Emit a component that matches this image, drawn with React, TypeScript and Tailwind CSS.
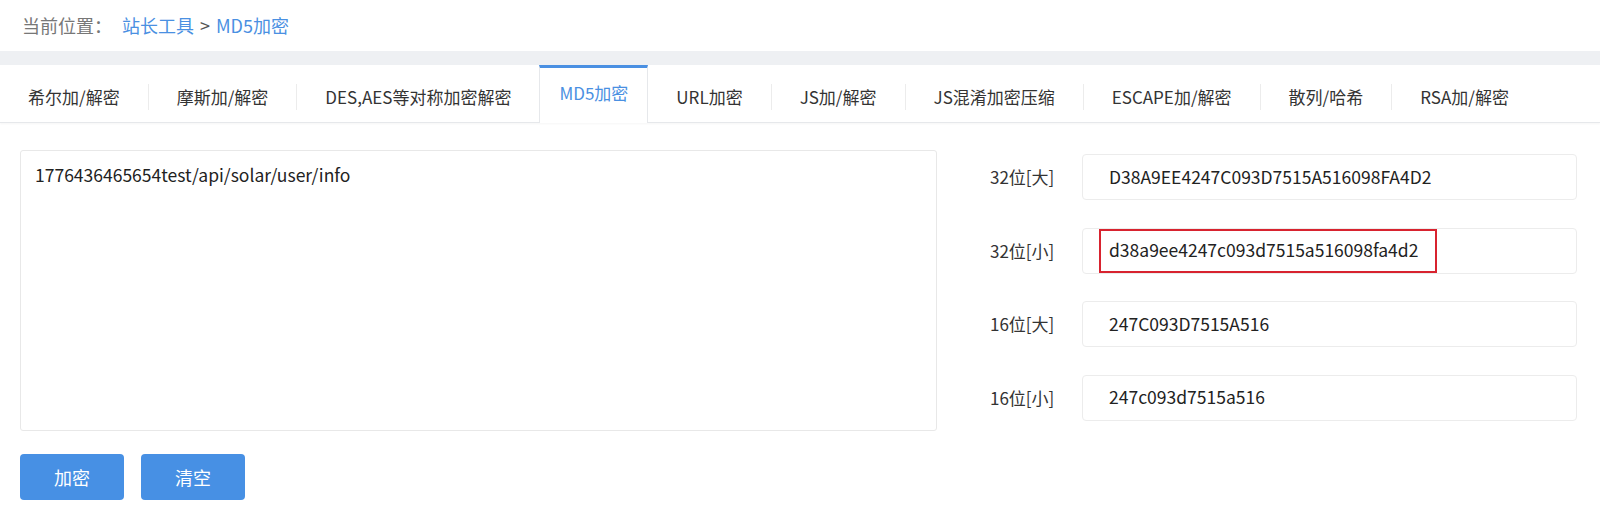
import React from "react";

const tabs = [
  "希尔加/解密",
  "摩斯加/解密",
  "DES,AES等对称加密解密",
  "MD5加密",
  "URL加密",
  "JS加/解密",
  "JS混淆加密压缩",
  "ESCAPE加/解密",
  "散列/哈希",
  "RSA加/解密",
];

const results = [
  { label: "32位[大]", value: "D38A9EE4247C093D7515A516098FA4D2" },
  { label: "32位[小]", value: "d38a9ee4247c093d7515a516098fa4d2", marked: true },
  { label: "16位[大]", value: "247C093D7515A516" },
  { label: "16位[小]", value: "247c093d7515a516" },
];

export default function App() {
  const active = "MD5加密";

  return (
    <div
      className="w-[1600px] h-[527px] bg-white text-[#333] overflow-hidden"
      style={{ fontFamily: '"Noto Sans CJK SC", "Noto Sans", sans-serif' }}
    >
      {/* breadcrumb */}
      <div className="h-[51px] flex items-center pl-[22px] text-[18px]">
        <span className="text-[#777]">当前位置：</span>
        <span className="ml-[10px] text-[#4a90e2]">站长工具</span>
        <span className="mx-[6px] text-[#555]">&gt;</span>
        <span className="text-[#4a90e2]">MD5加密</span>
      </div>

      <div className="h-[14px] bg-[#eef0f3]" />

      {/* tabs */}
      <div className="h-[58px] flex items-stretch border-b border-[#e6e8eb] bg-white shadow-[0_1px_2px_rgba(0,0,0,0.04)]">
        {tabs.map((t, i) => {
          const isActive = t === active;
          const nextActive = tabs[i + 1] === active;
          if (isActive) {
            return (
              <div
                key={t}
                className="relative -mb-px px-[19px] pt-[12px] flex items-start justify-center bg-white border-t-[3px] border-[#4a90e2] border-x border-x-[#e6e8eb] text-[#4a90e2] text-[17px]"
              >
                <span>{t}</span>
              </div>
            );
          }
          return (
            <div key={t} className="flex items-center">
              <div className="px-[28px] pt-[6px] text-[17px] whitespace-nowrap">{t}</div>
              {!nextActive && i < tabs.length - 1 && (
                <div className="w-px h-[26px] mt-[6px] bg-[#ececec]" />
              )}
            </div>
          );
        })}
      </div>

      {/* body */}
      <div className="flex pt-[27px] pl-[20px]">
        <div className="w-[917px]">
          <div className="h-[281px] border border-[#e8e8e8] rounded-[3px] pl-[14px] pt-[11px] text-[17.5px] text-[#222]">
            1776436465654test/api/solar/user/info
          </div>
          <div className="flex gap-[17px] mt-[23px]">
            <button className="w-[104px] h-[46px] rounded-[4px] bg-[#4790e4] text-white text-[18px]">
              加密
            </button>
            <button className="w-[104px] h-[46px] rounded-[4px] bg-[#4790e4] text-white text-[18px]">
              清空
            </button>
          </div>
        </div>

        <div className="flex flex-col gap-[27.5px] pt-[4px] pl-[53px]">
          {results.map((r) => (
            <div key={r.label} className="flex items-center">
              <div className="w-[92px] text-[17px] text-[#333]">{r.label}</div>
              <div className="relative w-[495px] h-[46px] border border-[#ececec] rounded-[4px] flex items-center pl-[26px] text-[17.5px] text-[#222]">
                {r.value}
                {r.marked && (
                  <div className="absolute left-[16px] top-0 w-[338px] h-[44px] border-2 border-[#d8232f]" />
                )}
              </div>
            </div>
          ))}
        </div>
      </div>
    </div>
  );
}
